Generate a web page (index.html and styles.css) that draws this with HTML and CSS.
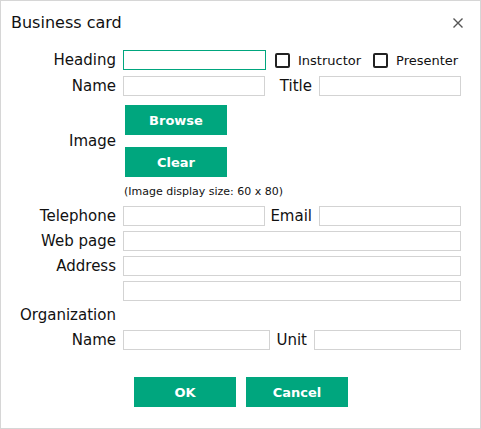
FILE: index.html
```html
<!DOCTYPE html>
<html>
<head>
<meta charset="utf-8">
<link rel="stylesheet" href="styles.css">
</head>
<body>
<div class="window">
  <div class="titlebar">
    <span class="title">Business card</span>
    <svg class="close" width="10" height="10" viewBox="0 0 10 10"><path d="M0.5 0.5 L9.5 9.5 M9.5 0.5 L0.5 9.5" stroke="#555" stroke-width="1.4" fill="none"/></svg>
  </div>
  <div class="form">
    <div class="row r-heading">
      <label class="lbl">Heading</label>
      <input class="inp w-heading focus" type="text">
      <span class="check"><span class="box"></span><span class="ctext">Instructor</span></span>
      <span class="check c2"><span class="box"></span><span class="ctext">Presenter</span></span>
    </div>
    <div class="row r-gap6">
      <label class="lbl">Name</label>
      <input class="inp w-left" type="text">
      <label class="lbl2">Title</label>
      <input class="inp w-right" type="text">
    </div>
    <div class="row img-row">
      <label class="lbl">Image</label>
      <div class="btncol">
        <button class="btn">Browse</button>
        <button class="btn">Clear</button>
      </div>
    </div>
    <div class="caption">(Image display size: 60 x 80)</div>
    <div class="row r-tel">
      <label class="lbl">Telephone</label>
      <input class="inp w-left" type="text">
      <label class="lbl2">Email</label>
      <input class="inp w-right" type="text">
    </div>
    <div class="row r-gap5">
      <label class="lbl">Web page</label>
      <input class="inp w-full" type="text">
    </div>
    <div class="row r-gap5">
      <label class="lbl">Address</label>
      <input class="inp w-full" type="text">
    </div>
    <div class="row r-gap5">
      <span class="lbl"></span>
      <input class="inp w-full" type="text">
    </div>
    <div class="row org">Organization</div>
    <div class="row r-org2">
      <label class="lbl">Name</label>
      <input class="inp w-org" type="text">
      <label class="lbl3">Unit</label>
      <input class="inp w-org" type="text">
    </div>
  </div>
  <div class="actions">
    <button class="btn">OK</button>
    <button class="btn">Cancel</button>
  </div>
</div>
</body>
</html>
```
FILE: styles.css
```css
html, body {
  margin: 0;
  padding: 0;
  background: #ffffff;
}
body {
  font-family: "DejaVu Sans", sans-serif;
  color: #111111;
}
.window {
  width: 481px;
  height: 429px;
  box-sizing: border-box;
  border: 1px solid #d6d6d6;
  background: #ffffff;
}
.titlebar {
  display: flex;
  justify-content: space-between;
  align-items: center;
  padding: 12px 17px 0 10px;
  height: 19px;
}
.title {
  font-size: 16px;
  line-height: 19px;
  color: #111;
}
.close {
  display: block;
  margin-top: 0;
}
.form {
  margin-top: 18px;
}
.row {
  display: flex;
  align-items: center;
  height: 20px;
}
.r-gap6 { margin-top: 6px; }
.r-gap5 { margin-top: 5px; }
.r-tel { margin-top: 8px; }
.lbl {
  width: 115px;
  margin-right: 7px;
  text-align: right;
  font-size: 15px;
  line-height: 20px;
  flex-shrink: 0;
}
.lbl2 {
  width: 47px;
  margin-right: 7px;
  text-align: right;
  font-size: 15px;
  line-height: 20px;
}
.lbl3 {
  width: 37px;
  margin-right: 7px;
  text-align: right;
  font-size: 15px;
  line-height: 20px;
}
.inp {
  box-sizing: border-box;
  height: 20px;
  border: 1px solid #d3d3d3;
  border-radius: 0;
  padding: 0 3px;
  margin: 0;
  background: #fff;
  outline: none;
  font-family: "DejaVu Sans", sans-serif;
  font-size: 13px;
}
.focus {
  border-color: #00a67e;
}
.w-heading { width: 143px; }
.w-left { width: 142px; }
.w-right { width: 142px; }
.w-full { width: 338px; }
.w-org { width: 147px; }
.check {
  display: flex;
  align-items: center;
  margin-left: 9px;
  font-size: 13px;
  padding-top: 1px;
}
.check.c2 { margin-left: 12px; }
.box {
  box-sizing: border-box;
  width: 15px;
  height: 15px;
  border: 2px solid #222;
  border-radius: 2px;
}
.ctext {
  margin-left: 8px;
  line-height: 16px;
}
.img-row {
  height: auto;
  margin-top: 9px;
}
.btncol {
  display: flex;
  flex-direction: column;
  gap: 12px;
  margin-left: 2px;
}
.btn {
  width: 102px;
  height: 30px;
  border: none;
  border-radius: 0;
  margin: 0;
  padding: 0;
  background: #00a67e;
  color: #ffffff;
  font-family: "DejaVu Sans", sans-serif;
  font-weight: bold;
  font-size: 13px;
}
.caption {
  margin-top: 8px;
  margin-left: 123px;
  font-size: 11px;
  line-height: 13px;
}
.org {
  margin-top: 4px;
  padding-left: 19px;
  font-size: 15px;
}
.r-org2 { margin-top: 5px; }
.actions {
  display: flex;
  justify-content: center;
  gap: 10px;
  margin-top: 27px;
  padding-left: 1px;
}
```
